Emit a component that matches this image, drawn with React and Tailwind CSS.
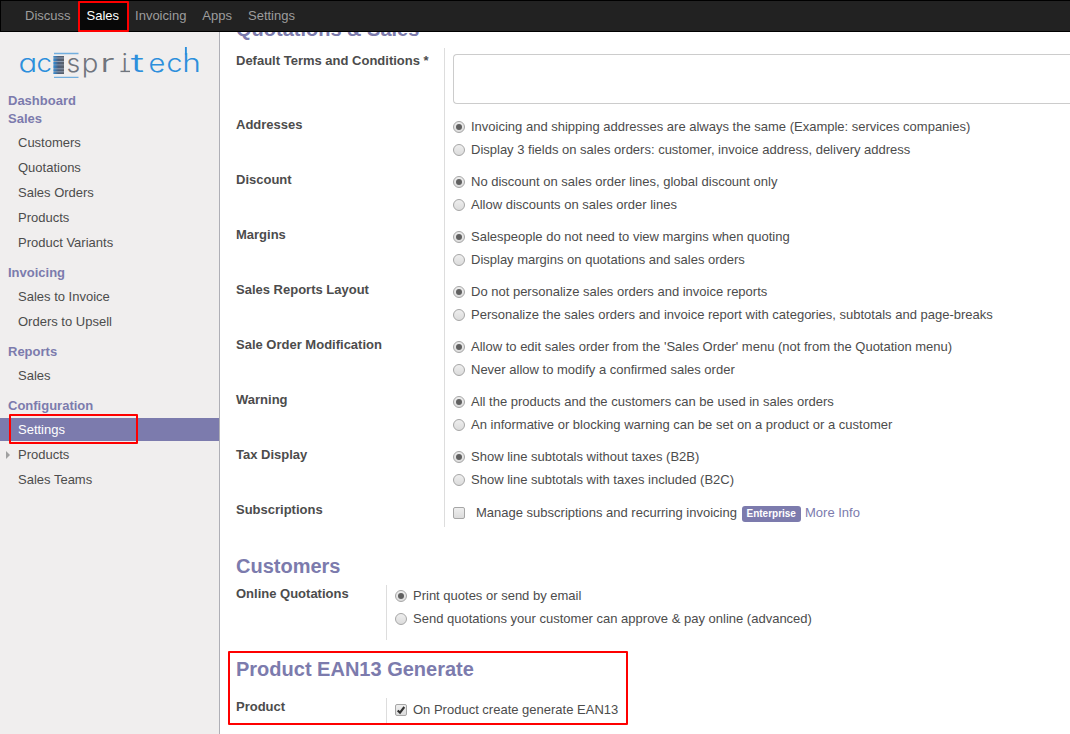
const SECTIONS = [
  { title: 'Sales', items: ['Customers', 'Quotations', 'Sales Orders', 'Products', 'Product Variants'] },
  { title: 'Invoicing', items: ['Sales to Invoice', 'Orders to Upsell'] },
  { title: 'Reports', items: ['Sales'] },
  { title: 'Configuration', items: ['Settings', 'Products', 'Sales Teams'] },
];

const OPTIONS = [
  ['Addresses', 'Invoicing and shipping addresses are always the same (Example: services companies)', 'Display 3 fields on sales orders: customer, invoice address, delivery address'],
  ['Discount', 'No discount on sales order lines, global discount only', 'Allow discounts on sales order lines'],
  ['Margins', 'Salespeople do not need to view margins when quoting', 'Display margins on quotations and sales orders'],
  ['Sales Reports Layout', 'Do not personalize sales orders and invoice reports', 'Personalize the sales orders and invoice report with categories, subtotals and page-breaks'],
  ['Sale Order Modification', "Allow to edit sales order from the 'Sales Order' menu (not from the Quotation menu)", 'Never allow to modify a confirmed sales order'],
  ['Warning', 'All the products and the customers can be used in sales orders', 'An informative or blocking warning can be set on a product or a customer'],
  ['Tax Display', 'Show line subtotals without taxes (B2B)', 'Show line subtotals with taxes included (B2C)'],
];

// letter, left edge, horizontal stretch, colour
const LOGO_LETTERS = [
  ['a', 0.5, 1.22, '#2d8fdc'],
  ['c', 18.4, 1.08, '#2d8fdc'],
  ['s', 48.6, 1.04, '#70757d'],
  ['p', 63.8, 1.08, '#70757d'],
  ['r', 82.0, 1.6, '#70757d'],
  ['i', 103.8, 1, '#70757d'],
  ['t', 112.8, 1.75, '#2d8fdc'],
  ['e', 130.4, 1.14, '#2d8fdc'],
  ['c', 148.4, 1.12, '#2d8fdc'],
  ['h', 164.2, 1.24, '#2d8fdc'],
];

function Highlight({ className }) {
  return <div className={`pointer-events-none absolute z-20 rounded-[1px] border-2 border-[#fe0000] ${className}`} />;
}

function Radio({ checked }) {
  return (
    <span className="mt-px flex h-3 w-3 shrink-0 items-center justify-center rounded-full border border-[#a6a6a6] bg-linear-to-b from-[#eeeeee] to-[#dcdcdc]">
      {checked && <span className="h-1.5 w-1.5 rounded-full bg-[#606060]" />}
    </span>
  );
}

function Checkbox({ checked }) {
  return (
    <span className="flex h-3 w-3 shrink-0 items-center justify-center rounded-[2px] border border-[#a6a6a6] bg-linear-to-b from-[#eeeeee] to-[#dcdcdc]">
      {checked && (
        <svg width="10" height="10" viewBox="0 0 10 10" className="shrink-0">
          <path d="M1.7 5.4 4 7.6 8.3 2" fill="none" stroke="#333" strokeWidth="2.1" />
        </svg>
      )}
    </span>
  );
}

function RadioGroup({ options }) {
  return options.map((text, i) => (
    <div key={text} className="flex h-[23px] items-center gap-1.5">
      <Radio checked={i === 0} />
      <span>{text}</span>
    </div>
  ));
}

function Logo() {
  return (
    <svg width="184" height="36" viewBox="0 0 184 36" className="ml-[18px] block" role="img" aria-label="acespritech">
      <g className="font-['Inter',sans-serif] font-light [font-feature-settings:'cv11']" fontSize="25.5">
        {LOGO_LETTERS.map(([letter, x, stretch, color]) => (
          <text key={x} transform={`translate(${x} 29) scale(${stretch} 1)`} fill={color}>{letter}</text>
        ))}
      </g>
      <path d="M102.500 28.400h9.500" stroke="#70757d" strokeWidth="1.4" />
      <path d="M167.900 4v8" stroke="#2d8fdc" strokeWidth="1.9" />
      <path d="M36 10.500h24.500M36 34.400h24.500" stroke="#72aede" strokeWidth="1.3" />
      <defs>
        <linearGradient id="bars">
          <stop offset="0" stopColor="#2d8fdc" />
          <stop offset=".45" stopColor="#4a5e7c" />
          <stop offset="1" stopColor="#5c6068" />
        </linearGradient>
      </defs>
      <rect x="35.500" y="13" width="10.500" height="18" fill="#8e9bae" />
      <g fill="url(#bars)">
        <rect x="35.500" y="13" width="10.500" height="1.500" />
        <rect x="35.500" y="15.500" width="10.500" height="2.500" />
        <rect x="35.500" y="19" width="10.500" height="2.500" />
        <rect x="35.500" y="22.300" width="10.500" height="3" />
        <rect x="35.500" y="26.300" width="10.500" height="2" />
        <rect x="35.500" y="29.300" width="10.500" height="1.700" />
      </g>
    </svg>
  );
}

function MenuItem({ label, selected, expandable }) {
  return (
    <li className={`flex h-[23px] items-center ${selected ? 'bg-[#7c7bad] text-white' : ''}`}>
      <span className="w-[18px] shrink-0 pl-1.5">
        {expandable && (
          <svg width="4" height="8" viewBox="0 0 4 8"><path d="M0 0 4 4 0 8Z" fill="#a0a0a0" /></svg>
        )}
      </span>
      {label}
    </li>
  );
}

function Sidebar() {
  return (
    <aside className="w-[220px] shrink-0 border-r border-[#afafb6] bg-[#f0eeee] pt-[11px]">
      <Logo />
      <h3 className="mt-[13px] h-[18px] pl-2 leading-[18px] font-bold text-[#7c7bad]">Dashboard</h3>
      <nav className="flex flex-col gap-2.5">
        {SECTIONS.map(({ title, items }) => (
          <section key={title}>
            <h3 className="h-[18px] pl-2 leading-[18px] font-bold text-[#7c7bad]">{title}</h3>
            <ul className="mt-[3px] flex flex-col gap-0.5">
              {items.map((item) => (
                <MenuItem key={item} label={item} selected={item === 'Settings'} expandable={title === 'Configuration' && item === 'Products'} />
              ))}
            </ul>
          </section>
        ))}
      </nav>
    </aside>
  );
}

function TopBar() {
  return (
    <header className="relative z-10 flex h-8 shrink-0 border border-r-0 border-black bg-[#222222] pl-4 text-[#9d9d9d]">
      {['Discuss', 'Sales', 'Invoicing', 'Apps', 'Settings'].map((item) => (
        <a key={item} className={`flex items-center px-2 pb-px ${item === 'Sales' ? 'bg-[#080808] text-white' : ''}`}>{item}</a>
      ))}
    </header>
  );
}

export default function App() {
  return (
    <div className="relative flex h-[734px] w-[1070px] flex-col overflow-hidden bg-white font-['Liberation_Sans',Arial,sans-serif] text-[13px] leading-[18px] text-[#4c4c4c]">
      <TopBar />
      <div className="flex min-h-0 flex-1">
        <Sidebar />
        <main className="flex min-w-0 flex-1 flex-col overflow-hidden pl-4 whitespace-nowrap">
          <h2 className="-mt-[15px] h-[31px] shrink-0 text-xl leading-6 font-bold text-[#7c7bad]">Quotations &amp; Sales</h2>
          <div className="flex h-[67px] shrink-0">
            <div className="w-[208px] shrink-0 pt-1 font-bold">Default Terms and Conditions *</div>
            <div className="flex-1 border-l border-[#dddddd] pt-1.5 pl-2">
              <div className="h-[50px] rounded-l border border-r-0 border-[#cccccc]" />
            </div>
          </div>
          {OPTIONS.map(([label, ...options]) => (
            <div key={label} className="flex h-[55px] shrink-0">
              <div className="w-[208px] shrink-0 pt-px font-bold">{label}</div>
              <div className="border-l border-[#dddddd] pl-2"><RadioGroup options={options} /></div>
            </div>
          ))}
          <div className="flex h-[27px] shrink-0">
            <div className="w-[208px] shrink-0 pt-px font-bold">Subscriptions</div>
            <div className="flex items-center border-l border-[#dddddd] pb-px pl-2">
              <Checkbox />
              <span className="ml-[11px]">Manage subscriptions and recurring invoicing</span>
              <span className="mt-0.5 ml-[5px] h-4 rounded-[3px] bg-[#7c7bad] px-[4.600px] text-[10px] leading-4 font-bold text-white">Enterprise</span>
              <a className="ml-[4.500px] text-[#7c7bad]">More Info</a>
            </div>
          </div>

          <h2 className="mt-[27px] h-[31px] shrink-0 text-xl leading-6 font-bold text-[#7c7bad]">Customers</h2>
          <div className="flex h-[55px] shrink-0">
            <div className="w-[150px] shrink-0 font-bold">Online Quotations</div>
            <div className="border-l border-[#dddddd] pl-2">
              <div className="-mt-px">
                <RadioGroup options={['Print quotes or send by email', 'Send quotations your customer can approve & pay online (advanced)']} />
              </div>
            </div>
          </div>

          <h2 className="mt-[17px] h-[41px] shrink-0 text-xl leading-6 font-bold text-[#7c7bad]">Product EAN13 Generate</h2>
          <div className="flex h-[26px] shrink-0">
            <div className="w-[150px] shrink-0 font-bold">Product</div>
            <div className="flex items-center gap-1.5 border-l border-[#dddddd] pb-0.5 pl-2">
              <Checkbox checked />
              <span>On Product create generate EAN13</span>
            </div>
          </div>
        </main>
      </div>
      <Highlight className="top-px left-[78px] h-[31px] w-[51px]" />
      <Highlight className="top-[414px] left-[9px] h-[30px] w-[129px]" />
      <Highlight className="top-[651px] left-[228px] h-[74px] w-[400px]" />
    </div>
  );
}
